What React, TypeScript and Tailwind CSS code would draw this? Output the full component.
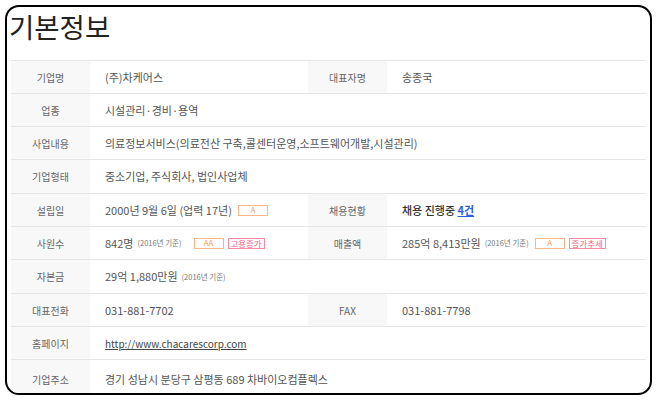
import React from 'react';

type Cell = { label: string; value: React.ReactNode };
type Row = { h: string; cells: Cell[] };

const Badge = ({ children, tone }: { children: React.ReactNode; tone: 'orange' | 'pink' }) => (
  <span
    className={
      tone === 'orange'
        ? 'inline-flex h-[11px] w-[30px] items-center justify-center border border-[#f7b58a] text-[8px] leading-none text-[#f59a5e] ml-[6px]'
        : 'inline-flex h-[11px] w-[37px] items-center justify-center border border-[#f58aa3] text-[8.5px] leading-none text-[#ef5f80] ml-[4px]'
    }
  >
    {children}
  </span>
);

const Base = () => <span className="ml-[4px] text-[7.5px] text-[#777]">(2016년 기준)</span>;

const rows: Row[] = [
  { h: 'h-[33px]', cells: [{ label: '기업명', value: '(주)차케어스' }, { label: '대표자명', value: '송종국' }] },
  { h: 'h-[33px]', cells: [{ label: '업종', value: '시설관리·경비·용역' }] },
  {
    h: 'h-[33px]',
    cells: [{ label: '사업내용', value: '의료정보서비스(의료전산 구축,콜센터운영,소프트웨어개발,시설관리)' }],
  },
  { h: 'h-[34px]', cells: [{ label: '기업형태', value: '중소기업, 주식회사, 법인사업체' }] },
  {
    h: 'h-[33px]',
    cells: [
      {
        label: '설립일',
        value: (
          <>
            2000년 9월 6일 (업력 17년)
            <Badge tone="orange">A</Badge>
          </>
        ),
      },
      {
        label: '채용현황',
        value: (
          <span className="text-[11px] font-medium text-[#333]">
            채용 진행중{' '}
            <a href="#" className="font-bold text-[#2f5fe0] underline">
              4건
            </a>
          </span>
        ),
      },
    ],
  },
  {
    h: 'h-[33px]',
    cells: [
      {
        label: '사원수',
        value: (
          <>
            842명
            <Base />
            <span className="ml-[6px] inline-flex">
              <Badge tone="orange">AA</Badge>
              <Badge tone="pink">고용증가</Badge>
            </span>
          </>
        ),
      },
      {
        label: '매출액',
        value: (
          <>
            285억 8,413만원
            <Base />
            <Badge tone="orange">A</Badge>
            <Badge tone="pink">증가추세</Badge>
          </>
        ),
      },
    ],
  },
  {
    h: 'h-[34px]',
    cells: [
      {
        label: '자본금',
        value: (
          <>
            29억 1,880만원
            <Base />
          </>
        ),
      },
    ],
  },
  { h: 'h-[33px]', cells: [{ label: '대표전화', value: '031-881-7702' }, { label: 'FAX', value: '031-881-7798' }] },
  {
    h: 'h-[33px]',
    cells: [
      {
        label: '홈페이지',
        value: (
          <a href="#" className="text-[10px] text-[#444] underline">
            http://www.chacarescorp.com
          </a>
        ),
      },
    ],
  },
  { h: 'h-[40px]', cells: [{ label: '기업주소', value: '경기 성남시 분당구 삼평동 689 차바이오컴플렉스' }] },
];

export default function App() {
  return (
    <div
      className="h-[400px] w-[656px] bg-white pl-[5px] pt-[5px]"
      style={{ fontFamily: '"Noto Sans CJK KR", "Noto Sans", sans-serif' }}
    >
      <div className="h-[390px] w-[647px] overflow-hidden rounded-[14px] border-2 border-black bg-white">
        <div className="h-[53px] pl-[2px] pt-[6px]">
          <h1 className="text-[27.5px] font-normal leading-none text-[#222]">기본정보</h1>
        </div>
        <div className="mx-[4px] border-t border-[#e6e6e6]">
          {rows.map((row, i) => (
            <div key={i} className={`flex border-b border-[#e6e6e6] ${row.h}`}>
              {row.cells.map((c, j) => (
                <React.Fragment key={j}>
                  <div className="flex w-[79px] shrink-0 items-center justify-center bg-[#f8f8f8] text-[10px] text-[#666]">
                    {c.label}
                  </div>
                  <div
                    className={`flex items-center whitespace-nowrap pl-[15px] text-[11px] text-[#555] ${
                      row.cells.length === 2 && j === 0 ? 'w-[218px] shrink-0' : 'flex-1'
                    }`}
                  >
                    {c.value}
                  </div>
                </React.Fragment>
              ))}
            </div>
          ))}
        </div>
      </div>
    </div>
  );
}
